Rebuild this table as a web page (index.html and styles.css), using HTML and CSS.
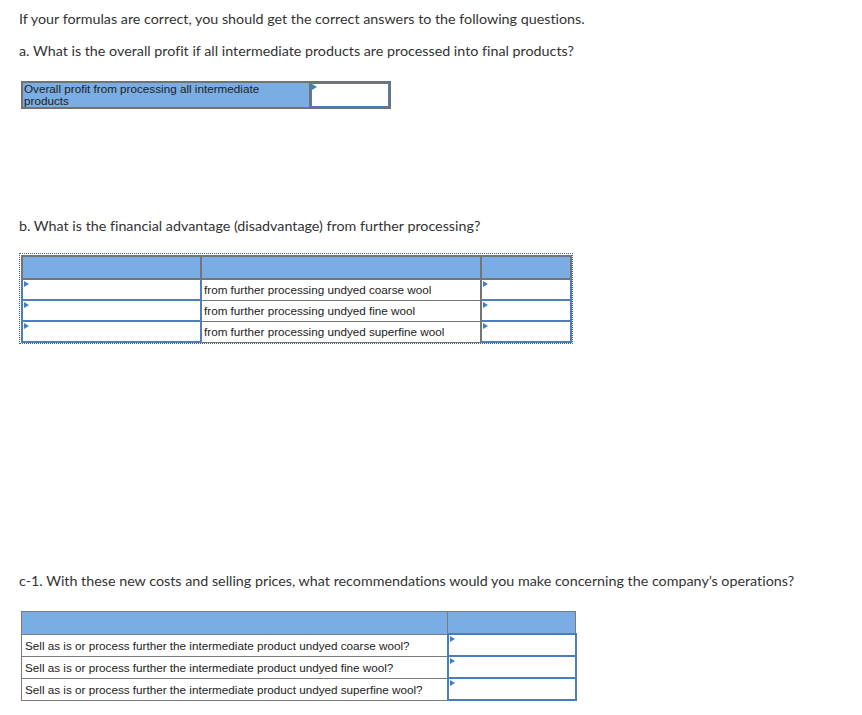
FILE: index.html
```html
<!DOCTYPE html>
<html>
<head>
<meta charset="utf-8">
<link rel="stylesheet" href="styles.css">
</head>
<body>
<div class="page">
  <p class="q q-first">If your formulas are correct, you should get the correct answers to the following questions.</p>
  <p class="q q-a">a. What is the overall profit if all intermediate products are processed into final products?</p>

  <table class="t1">
    <tr>
      <td class="label">Overall profit from processing all intermediate<br>products</td>
      <td class="input mark"></td>
    </tr>
  </table>

  <p class="q q-b">b. What is the financial advantage (disadvantage) from further processing?</p>

  <div class="dotwrap">
    <table class="t2">
      <tr class="head">
        <td class="c1"></td>
        <td class="c2"></td>
        <td class="c3"></td>
      </tr>
      <tr>
        <td class="input mark"></td>
        <td class="txt">from further processing undyed coarse wool</td>
        <td class="input mark"></td>
      </tr>
      <tr>
        <td class="input mark"></td>
        <td class="txt">from further processing undyed fine wool</td>
        <td class="input mark"></td>
      </tr>
      <tr>
        <td class="input mark"></td>
        <td class="txt">from further processing undyed superfine wool</td>
        <td class="input mark"></td>
      </tr>
    </table>
  </div>

  <p class="q q-c">c-1. With these new costs and selling prices, what recommendations would you make concerning the company’s operations?</p>

  <table class="t3">
    <tr class="head">
      <td class="c1"></td>
      <td class="c2"></td>
    </tr>
    <tr>
      <td class="txt">Sell as is or process further the intermediate product undyed coarse wool?</td>
      <td class="input mark"></td>
    </tr>
    <tr>
      <td class="txt">Sell as is or process further the intermediate product undyed fine wool?</td>
      <td class="input mark"></td>
    </tr>
    <tr>
      <td class="txt">Sell as is or process further the intermediate product undyed superfine wool?</td>
      <td class="input mark"></td>
    </tr>
  </table>
</div>
</body>
</html>
```

FILE: styles.css
```css
html, body {
  margin: 0;
  padding: 0;
  background: #ffffff;
}

.page {
  padding: 10px 0 0 19px;
  font-family: "Lato", "Open Sans", sans-serif;
  color: #333333;
}

.q {
  margin: 0;
  font-size: 14.3px;
  line-height: 18px;
  white-space: nowrap;
  font-variant-ligatures: none;
}

.q-a { margin-top: 14px; }
.q-b { margin-top: 108px; }
.q-c { margin-top: 225px; }

table {
  border-collapse: collapse;
  font-family: "Liberation Sans", Arial, sans-serif;
  font-size: 11.7px;
  color: #222222;
}

td {
  padding: 0;
  position: relative;
}

.mark::before {
  content: "";
  position: absolute;
  left: 1px;
  top: 1px;
  width: 0;
  height: 0;
  border-top: 3px solid transparent;
  border-bottom: 3px solid transparent;
  border-left: 5px solid #3f7fc8;
}

/* table 1 */
.t1 {
  margin: 21px 0 0 2px;
  border: 2px solid #727272;
}
.t1 .label {
  width: 285px;
  height: 23px;
  background: #7aade4;
  border: 2px solid #727272;
  padding-left: 1px;
  line-height: 12px;
  vertical-align: top;
}
.t1 .input {
  width: 78px;
  border: 2px solid #727272;
  box-shadow: inset 0 0 0 1px #4a7ebb;
  background: #fff;
}

/* table 2 */
.dotwrap {
  margin-top: 18px;
  display: inline-block;
  border: 1px dotted #3d6695;
  padding: 1px 0 0 1px;
}
.t2 td {
  border: 2px solid #757575;
}
.t2 .head td {
  background: #7aade4;
  height: 21px;
}
.t2 .c1 { width: 177px; }
.t2 .c2 { width: 278px; }
.t2 .c3 { width: 88px; }
.t2 .txt {
  height: 19px;
  padding-left: 2px;
  background: #fff;
  border-width: 1px 2px;
}
.t2 .input {
  height: 19px;
  border: 2px solid #4f7fb8;
  background: #fff;
}

/* table 3 */
.t3 {
  margin: 21px 0 0 2px;
  border: 1px solid #7b7b7b;
}
.t3 td {
  border: 1px solid #7b7b7b;
}
.t3 .head td {
  background: #7aade4;
  height: 21px;
}
.t3 .c1 { width: 425px; }
.t3 .c2 { width: 127px; }
.t3 .txt {
  height: 21px;
  padding-left: 3px;
  background: #fff;
}
.t3 .input {
  border: 2px solid #4a7ebb;
  background: #fff;
}
```
